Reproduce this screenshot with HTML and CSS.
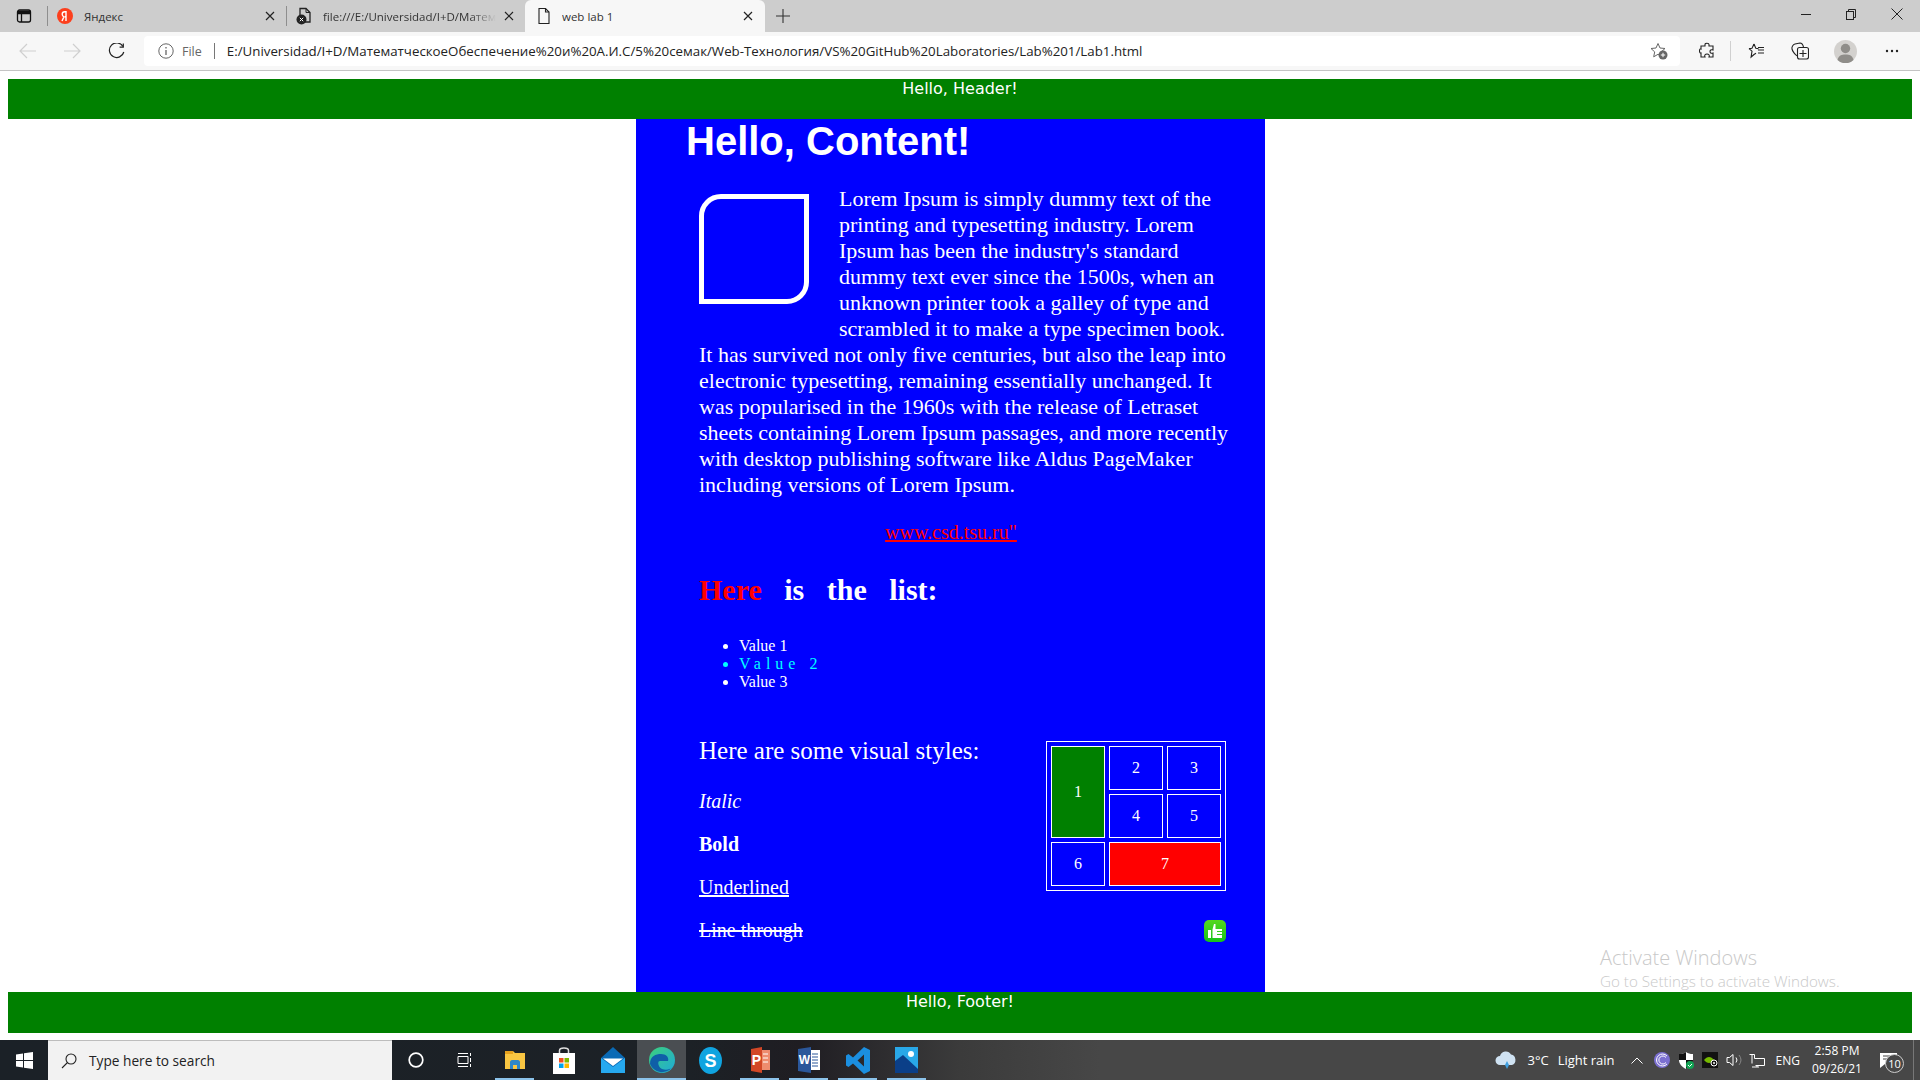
FILE: index.html
```html
<!DOCTYPE html>
<html lang="en">
<head>
<meta charset="utf-8">
<title>web lab 1</title>
<link rel="stylesheet" href="styles.css">
</head>
<body>
<div class="screen">
  <div class="tabstrip">
    <div class="strip-btn">
      <svg width="16" height="16" viewBox="0 0 16 16" fill="none" stroke="#111" stroke-width="1.3"><rect x="1.5" y="2" width="13" height="12" rx="2"/><path d="M1.5 5.5h13M5.500 5.500V14" /><path d="M2 2.600h12v2.900H2z" fill="#111" stroke="none"/></svg>
    </div>
    <div class="tab">
      <svg class="fav" width="16" height="16" viewBox="0 0 16 16"><circle cx="8" cy="8" r="8" fill="#fc3f1d"/><path d="M9 13V3.700H7.800C6.200 3.700 5.200 4.700 5.200 6.200c0 1.300.6 2 1.700 2.700L5 13M9 8.800H7.800" fill="none" stroke="#fff" stroke-width="1.400"/></svg>
      <span class="tab-title">Яндекс</span>
      <svg class="tab-x" width="10" height="10" viewBox="0 0 10 10" stroke="#222" stroke-width="1.200"><path d="M1 1l8 8M9 1l-8 8"/></svg>
    </div>
    <div class="tab">
      <svg class="fav" width="16" height="18" viewBox="0 0 16 18"><path d="M4 1.500h6l4 4V15H4z" fill="none" stroke="#222" stroke-width="1.300"/><path d="M10 1.500v4h4" fill="none" stroke="#222"/><circle cx="5.500" cy="12.500" r="5" fill="#222"/><path d="M3.800 10.800l3.400 3.400M7.200 10.800l-3.400 3.400" stroke="#fff"/></svg>
      <span class="tab-title tab-title-fade">file:///E:/Universidad/I+D/Матем</span>
      <svg class="tab-x" width="10" height="10" viewBox="0 0 10 10" stroke="#222" stroke-width="1.200"><path d="M1 1l8 8M9 1l-8 8"/></svg>
    </div>
    <div class="tab tab-active">
      <svg class="fav" width="16" height="18" viewBox="0 0 16 18" fill="none" stroke="#222" stroke-width="1.100"><path d="M3 1.500h6.500L13 5v11.500H3z"/><path d="M9.500 1.500V5H13"/></svg>
      <span class="tab-title">web lab 1</span>
      <svg class="tab-x" width="10" height="10" viewBox="0 0 10 10" stroke="#222" stroke-width="1.200"><path d="M1 1l8 8M9 1l-8 8"/></svg>
    </div>
    <div class="new-tab">
      <svg width="14" height="14" viewBox="0 0 14 14" stroke="#333" stroke-width="1.100"><path d="M7 0v14M0 7h14"/></svg>
    </div>
    <div class="win-controls">
      <svg width="10" height="10" viewBox="0 0 10 10" stroke="#222"><path d="M0 5.500h10"/></svg>
      <svg width="10" height="11" viewBox="0 0 10 11" fill="none" stroke="#222"><rect x=".5" y="2.500" width="7" height="8"/><path d="M2.500 2.500V.5h7v8h-2"/></svg>
      <svg width="12" height="12" viewBox="0 0 12 12" stroke="#222"><path d="M.5.500l11 11M11.500.500l-11 11"/></svg>
    </div>
  </div>

  <div class="toolbar">
    <div class="tool tool-nav">
      <svg width="18" height="16" viewBox="0 0 18 16" fill="none" stroke="#cfcfcf" stroke-width="1.200"><path d="M17 8H1M8 1L1 8l7 7"/></svg>
    </div>
    <div class="tool tool-nav">
      <svg width="18" height="16" viewBox="0 0 18 16" fill="none" stroke="#cfcfcf" stroke-width="1.200"><path d="M1 8h16M10 1l7 7-7 7"/></svg>
    </div>
    <div class="tool tool-nav">
      <svg width="17" height="17" viewBox="0 0 17 17" fill="none" stroke="#222" stroke-width="1.200"><path d="M15 3.500A7.300 7.300 0 1 0 15.800 9"/><path d="M15.300.500v3.700h-3.700"/></svg>
    </div>
    <div class="address">
      <svg class="addr-info" width="16" height="16" viewBox="0 0 16 16" fill="none" stroke="#666"><circle cx="8" cy="8" r="7.200"/><path d="M8 7v5M8 4v1.500" stroke-width="1.300"/></svg>
      <span class="addr-file">File</span>
      <span class="addr-sep"></span>
      <span class="addr-url">E:/Universidad/I+D/МатематческоеОбеспечение%20и%20А.И.С/5%20семак/Web-Технология/VS%20GitHub%20Laboratories/Lab%201/Lab1.html</span>
      <svg class="addr-star" width="18" height="18" viewBox="0 0 18 18" fill="none" stroke="#666"><path d="M8 1.500l2 4.500 5 .5-3.700 3.300 1 4.900L8 12.300l-4.300 2.500 1-4.900L1 6.500 6 6z"/><circle cx="13" cy="13" r="4.500" fill="#666" stroke="none"/><path d="M13 10.800v4.400M10.800 13h4.400" stroke="#fff"/></svg>
    </div>
    <div class="tool tool-ext">
      <svg width="16" height="18" viewBox="0 0 16 18" fill="none" stroke="#222" stroke-width="1.100"><path d="M6 2.500C6 .8 10 .8 10 2.500V4h4v4c-2-.8-3 .2-3 1.500s1 2.300 3 1.500v4h-4c.8-2-.3-3-2-3s-2.800 1-2 3H2v-4c-2 .6-2-5 0-4V4h4z"/></svg>
    </div>
    <span class="tool-sep"></span>
    <div class="tool tool-fav">
      <svg width="18" height="18" viewBox="0 0 18 18" fill="none" stroke="#222" stroke-width="1.100"><path d="M7 2l1.800 4.300 2.700.3M2 6.600l3 2.600-.9 5.800L7 12.500l2-1.200M2 6.600l3-.3L7 2M11 8h6M11 11h6M11 5.500h6"/></svg>
    </div>
    <div class="tool tool-coll">
      <svg width="18" height="18" viewBox="0 0 18 18" fill="none" stroke="#222" stroke-width="1.100"><rect x="6.500" y="5.500" width="11" height="11.500" rx="2"/><path d="M12 8v7M8.500 11.500h7M6.500 14C4 13 1.500 9 1 7S2 2.500 4 2l5-1c2 0 3 2 3.500 4"/></svg>
    </div>
    <div class="tool tool-avatar">
      <svg width="23" height="23" viewBox="0 0 23 23"><circle cx="11.500" cy="11.500" r="11.500" fill="#d3d1ce"/><circle cx="11.500" cy="8.500" r="4.700" fill="#8f8d89"/><path d="M3.500 20c1-4.500 4-5.500 8-5.500s7 1 8 5.500a11.500 11.500 0 0 1-16 0z" fill="#8f8d89"/></svg>
    </div>
    <div class="tool tool-dots">
      <svg width="14" height="4" viewBox="0 0 14 4" fill="#222"><circle cx="2" cy="2" r="1.200"/><circle cx="7" cy="2" r="1.200"/><circle cx="12" cy="2" r="1.200"/></svg>
    </div>
  </div>

  <div class="viewport">
    <header class="bar bar-header">Hello, Header!</header>
    <main class="content">
      <h1 class="title">Hello, Content!</h1>
      <div class="article">
        <p class="lorem"><span class="shape"></span>Lorem Ipsum is simply dummy text of the printing and typesetting industry. Lorem Ipsum has been the industry's standard dummy text ever since the 1500s, when an unknown printer took a galley of type and scrambled it to make a type specimen book. It has survived not only five centuries, but also the leap into electronic typesetting, remaining essentially unchanged. It was popularised in the 1960s with the release of Letraset sheets containing Lorem Ipsum passages, and more recently with desktop publishing software like Aldus PageMaker including versions of Lorem Ipsum.</p>
        <p class="link-row"><a class="site-link" href="#">www.csd.tsu.ru"</a></p>
        <h2 class="list-title"><span class="red">Here</span> is the list:</h2>
        <ul class="values">
          <li>Value 1</li>
          <li class="value-alt">Value 2</li>
          <li>Value 3</li>
        </ul>
        <section class="visual">
          <table class="grid-table">
            <tr><td rowspan="2" class="cell-green">1</td><td>2</td><td>3</td></tr>
            <tr><td>4</td><td>5</td></tr>
            <tr><td>6</td><td colspan="2" class="cell-red">7</td></tr>
          </table>
          <h3 class="visual-title">Here are some visual styles:</h3>
          <p class="style-line"><i>Italic</i></p>
          <p class="style-line"><b>Bold</b></p>
          <p class="style-line"><u>Underlined</u></p>
          <div class="style-line style-last">
            <s>Line through</s>
            <svg class="thumb" width="22" height="22" viewBox="0 0 22 22"><defs><linearGradient id="g" x1="0" y1="0" x2="0" y2="1"><stop offset="0" stop-color="#55d81e"/><stop offset="1" stop-color="#16c21a"/></linearGradient></defs><rect width="22" height="22" rx="5" fill="url(#g)"/><path d="M4 10h3v8H4zM8.500 18V9.500L10 4h1.500v5H18v2h-5v1h5v2h-5v1h5v3z" fill="#fff"/></svg>
          </div>
        </section>
      </div>
    </main>
    <footer class="bar bar-footer">Hello, Footer!</footer>
    <div class="activate">
      <div class="activate-big">Activate Windows</div>
      <div class="activate-small">Go to Settings to activate Windows.</div>
    </div>
  </div>

  <div class="taskbar">
    <div class="tb-start">
      <svg width="17" height="17" viewBox="0 0 17 17" fill="#fff"><path d="M0 2.500l7-1v6.500H0zM8 1.300L17 0v8H8zM0 9h7v6.500l-7-1zM8 9h9v8l-9-1.300z"/></svg>
    </div>
    <div class="tb-search">
      <svg width="16" height="16" viewBox="0 0 16 16" fill="none" stroke="#222" stroke-width="1.100"><circle cx="10" cy="6" r="5"/><path d="M6.500 9.500L1 15"/></svg>
      <span>Type here to search</span>
    </div>
    <div class="tb-slot tb-cortana">
      <svg width="16" height="16" viewBox="0 0 16 16" fill="none" stroke="#fff" stroke-width="1.700"><circle cx="8" cy="8" r="6.800"/></svg>
    </div>
    <div class="tb-slot tb-view">
      <svg width="16" height="16" viewBox="0 0 16 16" fill="none" stroke="#fff"><path d="M1 4.500h10v7H1zM1 1.500h10M1 14.500h10M13.500 1v3M13.500 6v4M13.500 12v3"/></svg>
    </div>
    <div class="tb-slot tb-running">
      <svg width="22" height="20" viewBox="0 0 22 20"><path d="M1 1h8l2 2h10v16H1z" fill="#f9c642"/><path d="M1 1h8v3H1z" fill="#e6a11d"/><path d="M6 19v-7c0-1 1-2 2-2h6c1 0 2 1 2 2v7h-3v-4H9v4z" fill="#2d87c9"/></svg>
    </div>
    <div class="tb-slot">
      <svg width="22" height="27" viewBox="0 0 22 27"><path d="M6.500 7V3.500C6.500 1.500 8 1 11 1s4.500.5 4.500 2.500V7" fill="none" stroke="#ddd" stroke-width="1.500"/><rect y="6" width="22" height="21" fill="#fff"/><rect x="6" y="11" width="4.500" height="4.500" fill="#f25022"/><rect x="11.500" y="11" width="4.500" height="4.500" fill="#7fba00"/><rect x="6" y="16.500" width="4.500" height="4.500" fill="#00a4ef"/><rect x="11.500" y="16.500" width="4.500" height="4.500" fill="#ffb900"/></svg>
    </div>
    <div class="tb-slot">
      <svg width="24" height="26" viewBox="0 0 24 26"><path d="M12 0l12 11v15H0V11z" fill="#0a6ab5"/><path d="M0 11l12 9 12-9v15H0z" fill="#26a9ef"/><path d="M2 11.500h20L12 19z" fill="#fff"/></svg>
    </div>
    <div class="tb-slot tb-active">
      <svg width="26" height="26" viewBox="0 0 26 26"><defs><linearGradient id="e1" x1="0" y1="0" x2="1" y2="1"><stop offset="0" stop-color="#3cd07b"/><stop offset="1" stop-color="#1fa9d8"/></linearGradient></defs><circle cx="13" cy="13" r="13" fill="url(#e1)"/><path d="M1 17C1 9 7 7 12 7c6 0 8 4 7 7h-8c-3 0-2 6 2 8 4 1.500 8 .5 10-1.500A13 13 0 0 1 1 17z" fill="#0f5fa8"/></svg>
    </div>
    <div class="tb-slot">
      <svg width="23" height="27" viewBox="0 0 23 27"><ellipse cx="11.500" cy="13.500" rx="11.500" ry="13.500" fill="#10a4e0"/><text x="11.500" y="20" text-anchor="middle" class="ico-letter" font-size="18">S</text></svg>
    </div>
    <div class="tb-slot tb-running">
      <svg width="22" height="26" viewBox="0 0 22 26"><path d="M2 2l11-2v26L2 24z" fill="#d24726"/><path d="M13 3h8v20h-8z" fill="#ee8c6e"/><path d="M14 7h5M14 11h5M14 15h5" stroke="#fff"/><text x="7.500" y="18" text-anchor="middle" class="ico-letter" font-size="14">P</text></svg>
    </div>
    <div class="tb-slot tb-running">
      <svg width="22" height="26" viewBox="0 0 22 26"><path d="M0 2l13-2v26L0 24z" fill="#2b579a"/><path d="M13 3h9v20h-9z" fill="#fff"/><path d="M14 7h6M14 10h6M14 13h6M14 16h6M14 19h6" stroke="#2b579a"/><text x="6.500" y="17" text-anchor="middle" class="ico-letter" font-size="12">W</text></svg>
    </div>
    <div class="tb-slot tb-running">
      <svg width="24" height="27" viewBox="0 0 24 27"><path d="M18 0l6 3v21l-6 3-11-10.500-4.500 3.500L0 18.500v-10L2.500 7 7 10.500zM18 7.500l-6.500 6L18 19.500z" fill="#1b8fe0"/></svg>
    </div>
    <div class="tb-slot tb-running">
      <svg width="23" height="26" viewBox="0 0 23 26"><rect width="23" height="26" fill="#29a8e8"/><path d="M0 26V14l8-6 15 14v4z" fill="#0b3f88"/><circle cx="16" cy="7" r="3" fill="#fff"/></svg>
    </div>

    <div class="tray">
      <svg class="tray-cloud" width="22" height="18" viewBox="0 0 22 18"><path d="M5 14a4.500 4.500 0 0 1 0-9 6 6 0 0 1 11-1.500 5.500 5.500 0 0 1 1 10.500z" fill="#cfe2f2"/><path d="M12 10l2 4-2 4-2-4z" fill="#3f9fe0"/></svg>
      <span class="tray-temp">3°C</span>
      <span class="tray-rain">Light rain</span>
      <svg class="tray-chev" width="12" height="7" viewBox="0 0 12 7" fill="none" stroke="#fff"><path d="M.5 6.500L6 1l5.500 5.500"/></svg>
      <svg class="tray-ico" width="16" height="16" viewBox="0 0 16 16"><circle cx="8" cy="8" r="8" fill="#7b6fd0"/><path d="M13 12A6 6 0 1 1 13 4M12 10.500A4 4 0 1 1 12 5.500" fill="none" stroke="#fff"/></svg>
      <svg class="tray-ico" width="16" height="17" viewBox="0 0 16 17"><path d="M8 0c2 1.500 4 2 7 2v6c0 4-3 7-7 9-4-2-7-5-7-9V2c3 0 5-.5 7-2z" fill="#fff"/><path d="M8 0v8H1V2c3 0 5-.5 7-2zM8 8h7c0 4-3 7-7 9z" fill="#111"/><circle cx="12" cy="13" r="4" fill="#12a454"/><path d="M10 13l1.500 1.500L14 12" fill="none" stroke="#fff"/></svg>
      <svg class="tray-ico tray-nv" width="17" height="16" viewBox="0 0 17 16"><rect width="16" height="16" fill="#111"/><path d="M2 8c3-4 7-4 10 0-3 4-7 4-10 0z" fill="#76b900"/><circle cx="12" cy="11" r="3" fill="#111" stroke="#fff"/><circle cx="12" cy="11" r="1" fill="#fff"/></svg>
      <svg class="tray-ico tray-spk" width="17" height="14" viewBox="0 0 17 14" fill="none" stroke="#fff"><path d="M1 4.500h2.500L7 1.500v11l-3.500-3H1zM10 4.500a4 4 0 0 1 0 5"/><path d="M13 2a8 8 0 0 1 0 10" stroke="#888"/></svg>
      <svg class="tray-ico tray-mon" width="17" height="15" viewBox="0 0 17 15" fill="none" stroke="#fff"><path d="M1.500 1.500h5v4h10v7h-9M4 1.500v9M4 14h7M9 12.500V14"/></svg>
      <span class="tray-lang">ENG</span>
      <div class="tray-clock"><span>2:58 PM</span><span>09/26/21</span></div>
      <div class="tray-note">
        <svg width="17" height="15" viewBox="0 0 17 15" fill="#fff"><path d="M0 0h17v11H5l-5 4z"/><path d="M3 3h11M3 6h11" stroke="#444"/></svg>
        <span class="note-badge">10</span>
      </div>
      <span class="show-desktop"></span>
    </div>
  </div>
</div>
</body>
</html>
```

FILE: styles.css
```css
* { box-sizing: border-box; }
html, body { margin: 0; height: 100%; }
body { background: #fff; overflow: hidden; }
.screen { height: 100vh; display: flex; flex-direction: column; font-family: "Open Sans", "Noto Sans", sans-serif; }

/* tab strip */
.tabstrip { height: 32px; flex: none; background: #cdcdcd; display: flex; align-items: stretch; }
.strip-btn { width: 47px; display: flex; align-items: center; justify-content: center; }
.tab { width: 239px; display: flex; align-items: center; padding: 0 11px 0 10px; position: relative; font-size: 11.500px; color: #333; }
.tab::before { content: ""; position: absolute; left: 0; top: 6px; bottom: 6px; width: 1px; background: #8e8e8e; }
.tab-active { width: 240px; background: #f7f7f7; border-radius: 6px 6px 0 0; padding: 0 12px 0 11px; }
.tab-active::before { display: none; }
.fav { flex: none; margin-right: 11px; }
.tab-active .fav { margin-right: 10px; }
.tab-title { flex: 1; white-space: nowrap; overflow: hidden; }
.tab-title-fade { -webkit-mask-image: linear-gradient(to right, #000 85%, transparent); mask-image: linear-gradient(to right, #000 85%, transparent); margin-right: 8px; }
.tab-x { flex: none; }
.new-tab { width: 36px; display: flex; align-items: center; justify-content: center; }
.win-controls { margin-left: auto; display: flex; align-items: center; gap: 35px; padding: 0 17px 4px 0; }

/* toolbar */
.toolbar { height: 39px; flex: none; background: #f7f7f7; border-bottom: 1px solid #c4c4c4; display: flex; align-items: center; }
.tool { display: flex; align-items: center; justify-content: center; flex: none; }
.tool-nav { width: 44px; }
.toolbar .tool-nav:first-child { width: 50px; padding-left: 6px; }
.address { width: 1536px; margin-left: 6px; height: 30px; background: #fff; border-radius: 4px; display: flex; align-items: center; padding: 0 12px 0 14px; font-size: 13.300px; color: #222; }
.addr-info { flex: none; }
.addr-file { margin-left: 8px; color: #666; font-size: 12.500px; }
.addr-sep { width: 1px; height: 16px; background: #777; margin: 0 12px; }
.addr-url { flex: 1; white-space: nowrap; overflow: hidden; }
.addr-star { flex: none; }
.tool-ext { width: 46px; margin-left: 4px; }
.tool-sep { width: 1px; height: 20px; background: #d0d0d0; flex: none; }
.tool-fav { width: 49px; }
.tool-coll { width: 39px; }
.tool-avatar { width: 52px; }
.tool-dots { width: 45px; padding-right: 3px; }

/* page */
.viewport { flex: 1; min-height: 0; position: relative; padding: 8px 8px 7px; display: flex; flex-direction: column; background: #fff; }
.bar { flex: none; background: #008000; color: #fff; text-align: center; font-family: "DejaVu Sans", sans-serif; font-size: 16px; line-height: 20px; }
.bar-header { height: 40px; }
.bar-footer { height: 41px; }
.content { flex: 1; min-height: 0; width: 629px; margin-left: 628px; background: #00f; color: #fff; font-family: "Liberation Serif", serif; padding: 0 39px 0 50px; }
.title { margin: -1px 0 0; font: bold 40px/46px "Liberation Sans", sans-serif; }
.article { padding-left: 13px; padding-top: 22px; }
.lorem { margin: 0 -6px 0 0; font-size: 22px; line-height: 26px; }
.shape { float: left; width: 110px; height: 110px; margin: 8px 30px 20px 0; border: 5px solid #fff; border-radius: 22px 0 22px 0; }
.link-row { margin: 23px 0 0; font-size: 20px; line-height: 23px; text-align: center; padding-right: 23px; }
.site-link { color: #f00; }
.list-title { margin: 30px 0 0; font-size: 30px; line-height: 32px; word-spacing: 15px; }
.red { color: #f00; }
.values { margin: 31px 0 0; padding: 0 0 0 40px; font-size: 16px; line-height: 18px; }
.value-alt { color: #0ff; letter-spacing: 5px; }
.visual { margin-top: 45px; }
.grid-table { float: right; margin: 5px 0 0 0; border: 1px solid #fff; border-spacing: 4px; color: #fff; font-size: 16px; text-align: center; }
.grid-table td { width: 54px; height: 44px; padding: 0; border: 1px solid #fff; }
.cell-green { background: #008000; }
.cell-red { background: #f00; }
.visual-title { margin: 0 0 25px; font-weight: normal; font-size: 25px; line-height: 29px; }
.style-line { margin: 0 0 20px; font-size: 20px; line-height: 23px; }
.style-last { display: flex; justify-content: space-between; align-items: center; }
.thumb { margin-top: 1px; }
.ico-letter { fill: #fff; font-family: "Liberation Sans", sans-serif; font-weight: bold; }

/* watermark */
.activate { position: absolute; left: 1600px; top: 874px; color: #c9c9c9; font-weight: 300; }
.activate-big { font-size: 20px; line-height: 26px; }
.activate-small { font-size: 15.200px; line-height: 20px; }

/* taskbar */
.taskbar { height: 40px; flex: none; display: flex; align-items: center; background: linear-gradient(to right, #1b2127 0, #1c2126 690px, #1f1d22 800px, #3b3b3b 960px, #474747 1100px, #474747 100%); color: #fff; }
.tb-start { width: 48px; height: 40px; display: flex; align-items: center; justify-content: center; }
.tb-search { width: 344px; height: 40px; background: #f2f2f2; border-top: 1px solid #bdbdbd; display: flex; align-items: center; gap: 12px; padding-left: 13px; color: #222; font-size: 13.700px; }
.tb-slot { width: 49px; height: 40px; flex: none; display: flex; align-items: center; justify-content: center; position: relative; }
.tb-cortana { width: 47px; }
.tb-view { width: 51px; }
.tb-running::after, .tb-active::after { content: ""; position: absolute; left: 5px; right: 5px; bottom: 0; height: 2px; background: #8cc3ea; }
.tb-active { background: #4a4e52; }
.tb-active::after { left: 0; right: 0; }
.tray { margin-left: auto; display: flex; align-items: center; height: 40px; font-size: 13px; }
.tray-cloud { margin-right: 10px; }
.tray-temp { margin-right: 9px; }
.tray-rain { margin-right: 16px; }
.tray-chev { margin-right: 11px; }
.tray-ico { margin-right: 8px; }
.tray-nv { margin-right: 7px; }
.tray-spk { margin-right: 5px; }
.tray-mon { margin-right: 7px; }
.tray-lang { font-size: 12px; margin: 0 11px 0 4px; }
.tray-clock { width: 52px; display: flex; flex-direction: column; align-items: center; font-size: 12px; line-height: 18px; }
.tray-note { width: 50px; height: 40px; display: flex; align-items: center; justify-content: center; position: relative; }
.note-badge { position: absolute; left: 22px; top: 14px; width: 19px; height: 19px; border-radius: 50%; border: 1px solid #ccc; background: #474747; font-size: 11px; line-height: 17px; text-align: center; }
.show-desktop { width: 7px; height: 40px; border-left: 1px solid #777; }
```
